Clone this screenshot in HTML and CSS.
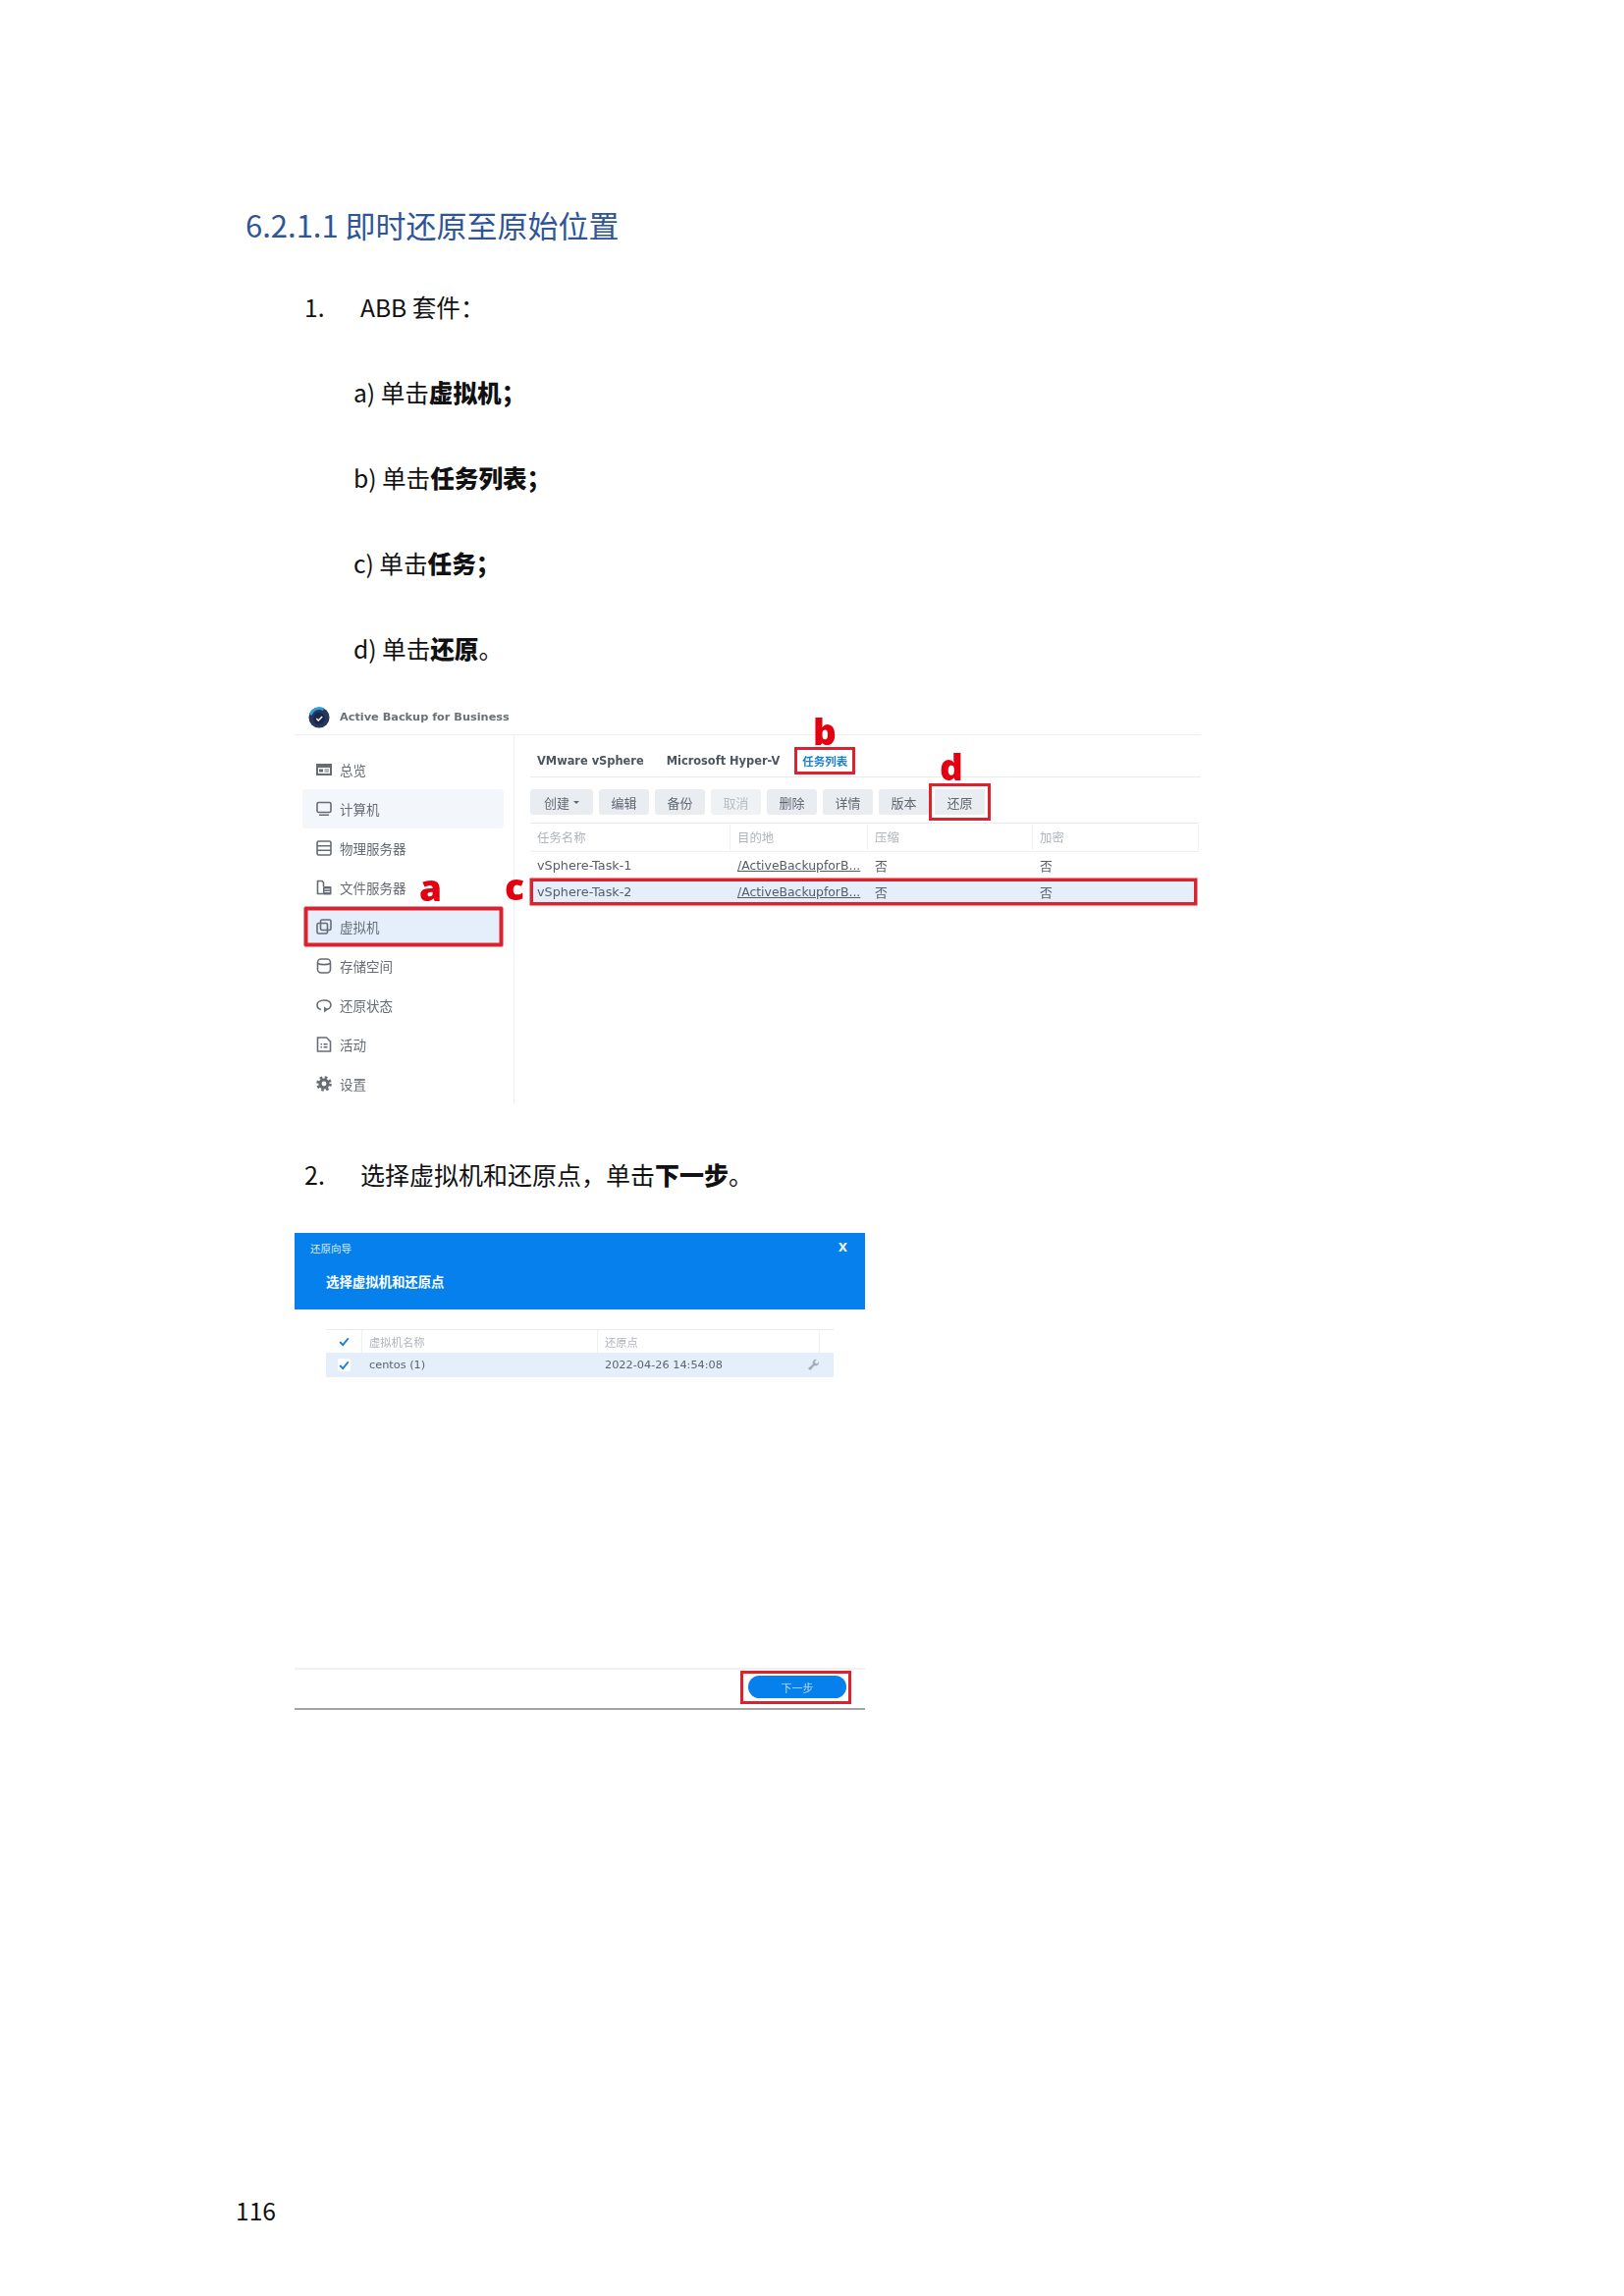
FILE: index.html
```html
<!DOCTYPE html>
<html lang="zh-CN">
<head>
<meta charset="utf-8">
<title>6.2.1.1 即时还原至原始位置</title>
<link rel="stylesheet" href="styles.css">
</head>
<body>
<main class="page">
  <h1 class="heading">6.2.1.1 即时还原至原始位置</h1>
  <p class="step first"><span class="num">1.</span>ABB 套件：</p>
  <p class="sub">a) 单击<b>虚拟机；</b></p>
  <p class="sub">b) 单击<b>任务列表；</b></p>
  <p class="sub">c) 单击<b>任务；</b></p>
  <p class="sub">d) 单击<b>还原</b>。</p>

  <section class="abb">
    <header class="abb-head">
      <svg class="logo" viewBox="0 0 24 24"><circle cx="12" cy="12" r="11.500" fill="#27365f"/><path d="M2.500 9A10 10 0 0 1 17 3" fill="none" stroke="#2f9fe0" stroke-width="3"/><circle cx="12" cy="13" r="6.500" fill="#1c2647"/><path d="M9 13l2.200 2.200L15.500 11" fill="none" stroke="#fff" stroke-width="1.600"/></svg>
      <span class="abb-title">Active Backup for Business</span>
    </header>
    <div class="abb-body">
      <nav class="side">
        <div class="nav"><svg viewBox="0 0 16 16"><path class="fill" d="M0 2h16v12H0z"/><path d="M2 6h12v6H2z" fill="#fff"/><path class="fill" d="M3 7.500h4v3H3zM8.500 7.500H13v1H8.500zM8.500 9.500H13v1H8.500z"/></svg>总览</div>
        <div class="nav hover"><svg viewBox="0 0 16 16"><rect class="line" x="1" y="1.500" width="14" height="10" rx="1.500"/><path class="fill" d="M3 13.500h10V15H3z"/></svg>计算机</div>
        <div class="nav"><svg viewBox="0 0 16 16"><rect class="line" x="1" y="1" width="14" height="14" rx="1.500"/><path class="line" d="M1 5.700h14M1 10.300h14"/></svg>物理服务器</div>
        <div class="nav"><svg viewBox="0 0 16 16"><path class="line" d="M7 14.500H1.500v-13h4.500l1.500 1.500V7"/><rect class="fill" x="7" y="7" width="8.500" height="8.500" rx="1"/><path d="M8.500 10h5.500M8.500 12.500h5.500" stroke="#fff" stroke-width="1"/></svg>文件服务器</div>
        <div class="nav active"><svg viewBox="0 0 16 16"><rect class="line" x="1" y="4.500" width="10.500" height="10.500" rx="1.500"/><rect class="line" x="4.500" y="1" width="10.500" height="10.500" rx="1.500"/></svg>虚拟机</div>
        <div class="nav"><svg viewBox="0 0 16 16"><rect class="line" x="1.500" y="1" width="13" height="14" rx="3.500"/><path class="line" d="M1.500 5.500c3 1.500 10 1.500 13 0"/></svg>存储空间</div>
        <div class="nav"><svg viewBox="0 0 16 16"><path class="line" d="M5 12.500C2.500 12 1 10 1 7.800 1 5 3.500 3 8 3s7 2 7 4.800c0 2.600-2.500 4.700-6.500 4.700"/><path class="fill" d="M8 9.500l4 3-4 3z"/></svg>还原状态</div>
        <div class="nav"><svg viewBox="0 0 16 16"><path class="line" d="M1.500 1h9l4 4v10h-13z"/><path class="fill" d="M4.500 7h1.500v1.500H4.500zM4.500 10h1.500v1.500H4.500zM7.500 7h4v1.500h-4zM7.500 10h4v1.500h-4z"/></svg>活动</div>
        <div class="nav"><svg viewBox="0 0 16 16"><circle class="gear" cx="8" cy="8" r="4"/><circle class="gear-teeth" cx="8" cy="8" r="6.500"/></svg>设置</div>
      </nav>
      <div class="content">
        <div class="tabs">
          <span class="tab">VMware vSphere</span>
          <span class="tab">Microsoft Hyper-V</span>
          <span class="tab current">任务列表</span>
        </div>
        <div class="toolbar">
          <span class="btn wide">创建 <i class="caret"></i></span>
          <span class="btn">编辑</span>
          <span class="btn">备份</span>
          <span class="btn off">取消</span>
          <span class="btn">删除</span>
          <span class="btn">详情</span>
          <span class="btn">版本</span>
          <span class="btn marked">还原</span>
        </div>
        <div class="tbl">
          <div class="tr th"><span>任务名称</span><span>目的地</span><span>压缩</span><span>加密</span></div>
          <div class="tr"><span>vSphere-Task-1</span><span class="path">/ActiveBackupforB...</span><span>否</span><span>否</span></div>
          <div class="tr sel"><span>vSphere-Task-2</span><span class="path">/ActiveBackupforB...</span><span>否</span><span>否</span></div>
        </div>
      </div>
    </div>
    <span class="mark mark-a">a</span>
    <span class="mark mark-b">b</span>
    <span class="mark mark-c">c</span>
    <span class="mark mark-d">d</span>
  </section>

  <p class="step second"><span class="num">2.</span>选择虚拟机和还原点，单击<b>下一步</b>。</p>

  <section class="wizard">
    <header class="wiz-head">
      <div class="wiz-top"><span>还原向导</span><span class="wiz-x">X</span></div>
      <div class="wiz-title">选择虚拟机和还原点</div>
    </header>
    <div class="wiz-body">
      <div class="wtr wth">
        <span class="cell-check"><svg viewBox="0 0 12 12"><path d="M2 6.500l2.800 2.800L10 3"/></svg></span><span>虚拟机名称</span><span>还原点</span><span></span>
      </div>
      <div class="wtr wsel">
        <span class="cell-check"><svg viewBox="0 0 12 12"><path d="M2 6.500l2.800 2.800L10 3"/></svg></span><span>centos (1)</span><span>2022-04-26 14:54:08</span>
        <span class="wrench"><svg viewBox="0 0 14 14"><path d="M13 3.500a3.800 3.800 0 0 1-5 4.200L3.500 13 1 10.800l5.300-4.700A3.800 3.800 0 0 1 10.500 1L8.500 3.200l.5 2 2 .4z"/></svg></span>
      </div>
    </div>
    <footer class="wiz-foot"><div class="next-box"><span class="next">下一步</span></div></footer>
  </section>

  <div class="pageno">116</div>
</main>
</body>
</html>
```

FILE: styles.css
```css
html, body { margin: 0; padding: 0; background: #fff; }
body { font-family: "Noto Sans CJK SC", "Noto Sans", sans-serif; color: #111; }
.page { width: 1654px; height: 2339px; box-sizing: border-box; padding: 199px 0 0 250px; position: relative; overflow: hidden; }
.heading { margin: 0; font-size: 31px; font-weight: 400; line-height: 60px; height: 60px; color: #2f5597; }
.step, .sub { margin: 0; font-size: 24.600px; line-height: 87px; height: 87px; }
.step.first { margin-left: 60px; margin-top: 10px; }
.num { display: inline-block; width: 57px; }
.sub { margin-left: 110px; }
b { font-weight: 900; }

.abb { margin: 8px 0 0 50px; width: 923px; height: 404px; position: relative; font-family: "DejaVu Sans", "Noto Sans CJK SC", sans-serif; color: #555c66; filter: blur(0.5px); }
.abb-head { height: 37px; box-sizing: border-box; border-bottom: 1.500px solid #edeff1; display: flex; align-items: center; padding: 1px 0 0 14px; }
.logo { width: 22px; height: 22px; margin-right: 10px; flex: none; }
.abb-title { font-size: 11.300px; font-weight: 700; color: #6a7078; }
.abb-body { display: grid; grid-template-columns: 224px 1fr; height: 367px; }
.side { border-right: 1.500px solid #edeff1; padding: 15px 0 0 8px; box-sizing: border-box; display: flex; flex-direction: column; }
.nav { height: 40px; width: 205px; flex: none; display: flex; align-items: center; padding-left: 14px; box-sizing: border-box; font-size: 13.500px; color: #666c75; border-radius: 4px; font-family: "Noto Sans CJK SC", sans-serif; }
.nav svg { width: 16px; height: 16px; margin-right: 8px; flex: none; }
.fill { fill: #666c75; }
.line { fill: none; stroke: #666c75; stroke-width: 1.600; }
.gear { fill: none; stroke: #666c75; stroke-width: 3.200; }
.gear-teeth { stroke: #666c75; stroke-width: 2.600; fill: none; stroke-dasharray: 2.600 2.500; }
.hover { background: #f3f7fc; }
.active { background: #e4effb; box-shadow: 0 0 0 0.500px #d9232e, inset 0 0 0 3.500px #d9232e; margin-left: 2px; width: 202px; padding-left: 12px; border-radius: 1px; }

.content { padding-left: 16px; min-width: 0; }
.tabs { height: 43px; box-sizing: border-box; border-bottom: 1.500px solid #e8eaed; display: flex; align-items: center; padding: 10px 0 0 7px; }
.tab { font-size: 11.400px; font-weight: 700; color: #4d5560; margin-right: 23px; white-space: nowrap; }
.tab.current { color: #1a7fd8; font-family: "Noto Sans CJK SC", sans-serif; box-shadow: 0 0 0 5px #fff, 0 0 0 8px #d9232e; font-size: 11.500px; line-height: 12px; margin-right: 0; }
.toolbar { display: flex; gap: 6px; padding-top: 12px; height: 46px; box-sizing: border-box; }
.btn { width: 51px; height: 26px; background: #e9edf2; border-radius: 3px; font-size: 13px; display: flex; align-items: center; justify-content: center; color: #5f6771; font-family: "Noto Sans CJK SC", sans-serif; flex: none; }
.wide { width: 64px; gap: 4px; }
.off { color: #b8bdc3; background: #eff2f5; }
.marked { border-radius: 0; box-shadow: 0 0 0 3px #fff, 0 0 0 6px #d9232e; }
.caret { width: 0; height: 0; border: 3px solid transparent; border-top: 3.500px solid #5f6771; border-bottom: 0; }
.tbl { border-top: 1.500px solid #e8eaed; width: 681px; }
.tr { display: grid; grid-template-columns: 204px 140px 168px 1fr; height: 27px; align-items: center; font-size: 12.800px; color: #555c66; }
.tr span { padding-left: 7px; white-space: nowrap; font-family: "DejaVu Sans", "Noto Sans CJK SC", sans-serif; }
.th { height: 28px; color: #b0b5bb; border-bottom: 1.500px solid #eff1f3; font-size: 12.400px; }
.th span { font-family: "Noto Sans CJK SC", sans-serif; border-right: 1px solid #f0f1f3; line-height: 26px; }
.sel { background: #e4effb; box-shadow: 0 0 0 0.500px #d9232e, inset 0 0 0 3px #d9232e; width: 679px; }
.tr .path { text-decoration: underline; font-size: 12.400px; }

.mark { position: absolute; color: #e30011; font-family: "Open Sans", sans-serif; font-weight: 800; font-size: 37px; line-height: 36px; }
.mark-a { left: 127px; top: 174px; }
.mark-b { left: 528px; top: 15px; }
.mark-c { left: 214px; top: 173px; }
.mark-d { left: 657px; top: 51px; }

.step.second { margin-left: 60px; margin-top: 37px; font-size: 25px; }

.wizard { margin-left: 50px; width: 581px; margin-top: 16px; font-family: "DejaVu Sans", "Noto Sans CJK SC", sans-serif; filter: blur(0.5px); border-bottom: 2px solid #a3a3a3; }
.wiz-head { background: #0580ec; height: 78px; box-sizing: border-box; color: #dcecfb; font-family: "Noto Sans CJK SC", sans-serif; padding: 7px 16px 0; }
.wiz-top { display: flex; justify-content: space-between; align-items: center; font-size: 10.500px; height: 17px; }
.wiz-x { font-family: "DejaVu Sans", sans-serif; font-weight: 700; font-size: 12px; color: #e8f3fd; margin-right: 2px; line-height: 17px; }
.wiz-title { font-size: 13.400px; font-weight: 700; color: #fff; padding: 15px 0 0 16px; line-height: 20px; }
.wiz-body { height: 365px; box-sizing: border-box; padding: 20px 32px 0 32px; }
.wtr { display: grid; grid-template-columns: 37px 240px 226px 1fr; align-items: center; font-size: 11.300px; color: #5c636c; }
.wth { height: 24px; border-top: 1.500px solid #e8eaed; box-sizing: border-box; color: #b0b5bb; font-family: "Noto Sans CJK SC", sans-serif; }
.wth > span { height: 100%; display: flex; align-items: center; padding-left: 7px; box-sizing: border-box; border-right: 1px solid #f0f1f3; }
.wth > span:last-child { border-right: 0; }
.wsel { height: 25px; background: #e4effb; }
.wsel > span { padding-left: 7px; white-space: nowrap; }
.wth > .cell-check, .wsel > .cell-check { padding-left: 12px; display: flex; align-items: center; }
.cell-check svg { width: 13px; height: 13px; background: #fff; border-radius: 2px; fill: none; stroke: #1a7fd8; stroke-width: 1.800; }
.wrench svg { width: 13px; height: 13px; fill: #a7adb4; display: block; margin-left: -20px; }
.wiz-foot { height: 41px; box-sizing: border-box; border-top: 2px solid #f1f1f3; display: flex; justify-content: flex-end; align-items: flex-start; padding: 1px 14px 0 0; }
.next-box { border: 3px solid #d9232e; padding: 2px 2px 3px 5px; }
.next { width: 100px; height: 23px; border-radius: 12px; background: #0580ec; color: #b9dcfa; font-size: 11px; display: flex; align-items: center; justify-content: center; font-family: "Noto Sans CJK SC", sans-serif; }

.pageno { position: absolute; left: 240px; top: 2233px; font-size: 24.600px; line-height: 36px; }
```
